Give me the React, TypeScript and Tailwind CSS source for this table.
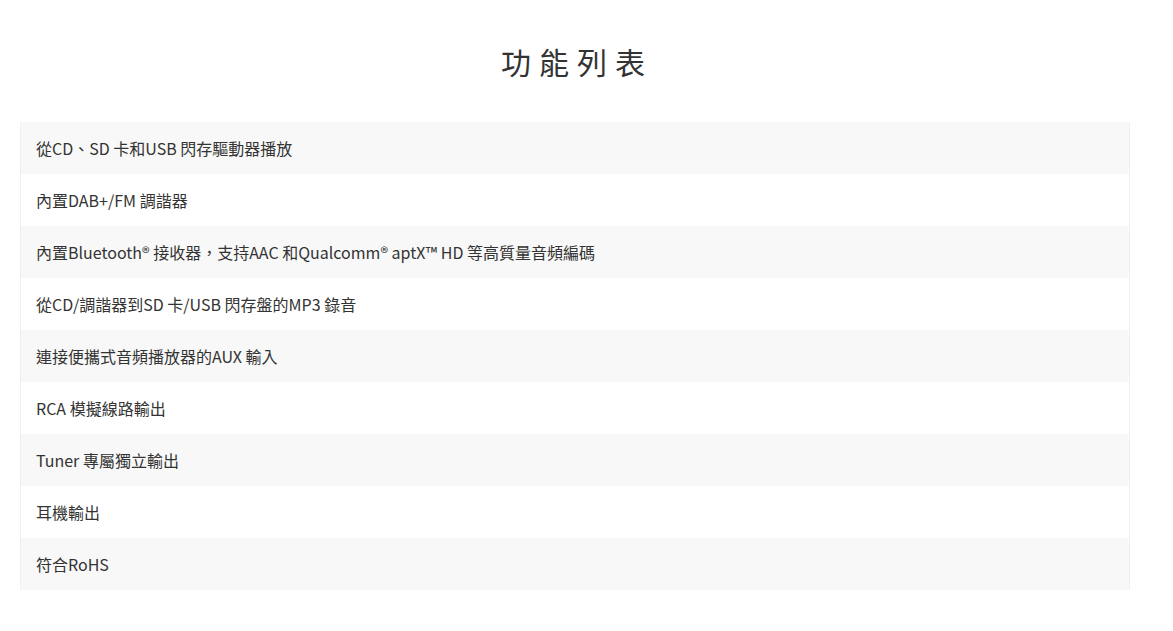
const features = [
  "從CD、SD 卡和USB 閃存驅動器播放",
  "內置DAB+/FM 調諧器",
  "內置Bluetooth® 接收器，支持AAC 和Qualcomm® aptX™ HD 等高質量音頻編碼",
  "從CD/調諧器到SD 卡/USB 閃存盤的MP3 錄音",
  "連接便攜式音頻播放器的AUX 輸入",
  "RCA 模擬線路輸出",
  "Tuner 專屬獨立輸出",
  "耳機輸出",
  "符合RoHS",
];

export default function App() {
  return (
    <main
      className="min-h-screen bg-white pt-[39px] text-[#333]"
      style={{ fontFamily: '"Noto Sans CJK TC", "Noto Sans", sans-serif' }}
    >
      <div className="ml-[20px] w-[1110px]">
        {/* Title */}
        <h1 className="text-center text-[30px] leading-[44px] tracking-[8px] pl-[4px] text-[#333]">
          功能列表
        </h1>

        {/* Feature rows */}
        <div className="mt-[39px] border-x border-[#f0f0f0]">
          {features.map((f, i) => (
            <div
              key={f}
              className={`h-[52px] flex items-center px-[15px] text-[16px] text-[#333] ${
                i % 2 === 0 ? "bg-[#f8f8f8]" : "bg-white"
              }`}
            >
              {f}
            </div>
          ))}
        </div>
      </div>
    </main>
  );
}
